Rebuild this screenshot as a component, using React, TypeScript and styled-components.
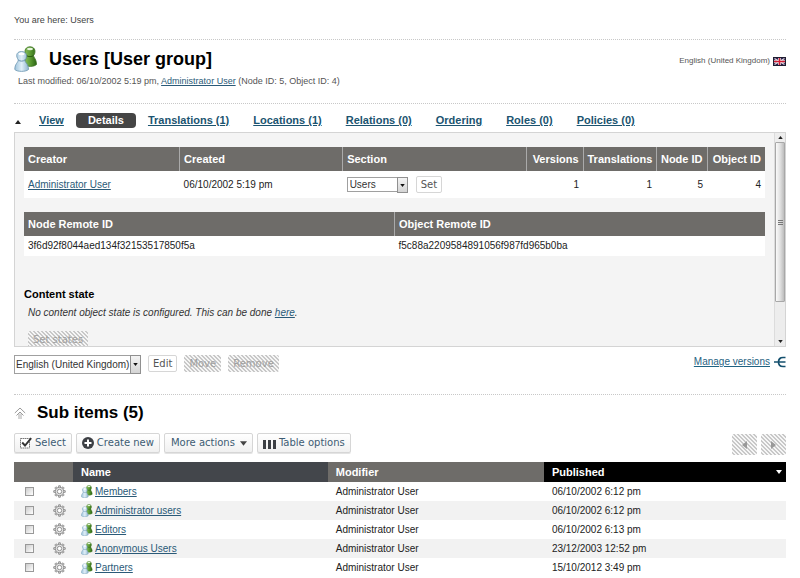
import React, { useId } from "react";
import styled, { createGlobalStyle, css } from "styled-components";

const GlobalStyle = createGlobalStyle`
  * { box-sizing: border-box; }
  body {
    margin: 0;
    background: #fff;
    color: #333;
    font-family: "Liberation Sans", Arial, sans-serif;
    font-size: 10px;
    line-height: 14px;
  }
  h1, h2, h3, p { margin: 0; }
  button, select, input { margin: 0; font: inherit; color: inherit; }
`;

const hatch = css`
  background: linear-gradient(45deg, #c8c8c8 25%, #f6f6f6 25% 50%, #c8c8c8 50% 75%, #f6f6f6 75%) 0 0 / 4px 4px;
`;

const Page = styled.div`
  padding: 0 14px;
`;

const Breadcrumb = styled.nav`
  padding: 13px 0 12px;
  font-size: 9px;
  color: #444;
`;

const Link = styled.a`
  color: #2a5a78;
  text-decoration: underline;
`;

const Header = styled.header`
  display: flex;
  justify-content: space-between;
  align-items: flex-start;
  padding: 6px 0 15px;
  border-top: 1px dotted #c8c8c8;
  border-bottom: 1px dotted #c8c8c8;
`;

const TitleRow = styled.div`
  display: flex;
  align-items: center;
  gap: 11px;
  height: 26px;
  margin-bottom: 2px;
`;

const Title = styled.h1`
  font-size: 18px;
  line-height: 26px;
  color: #000;
`;

const Modified = styled.p`
  padding-left: 4px;
  font-size: 9px;
  color: #555;
`;

const Language = styled.div`
  display: flex;
  align-items: center;
  gap: 3px;
  padding-top: 8px;
  font-size: 8px;
  color: #555;
`;

const TabBar = styled.nav`
  display: flex;
  align-items: center;
  padding: 8px 0 3px;
`;

const TabToggle = styled.button`
  display: flex;
  width: 13px;
  height: 17px;
  padding: 2px 1px 0;
  align-items: center;
  border: 0;
  background: none;
`;

const Tab = styled.a<{ $active?: boolean }>`
  padding: 0 12px;
  font-size: 11px;
  font-weight: bold;
  line-height: 17px;
  color: #1b5470;
  text-decoration: underline;
  ${(p) =>
    p.$active &&
    css`
      line-height: 15px;
      border-radius: 4px;
      background: #454545;
      color: #fff;
      text-decoration: none;
    `}
`;

const Panel = styled.section`
  display: flex;
  max-height: 215px;
  overflow: hidden;
  border: 1px solid #d4d4d4;
  background: #f4f4f4;
`;

const PanelBody = styled.div`
  flex: 1;
  min-width: 0;
  padding: 14px 9px 0;
`;

const ScrollBar = styled.div`
  display: flex;
  flex-direction: column;
  align-items: center;
  width: 11px;
  padding: 3px 0;
  border-left: 1px solid #dcdcdc;
  background: #ededed;
`;

const Thumb = styled.div`
  display: flex;
  flex-direction: column;
  align-items: center;
  justify-content: center;
  gap: 1px;
  width: 10px;
  height: 160px;
  margin: 3px 0 auto;
  border: 1px solid #a8a8a8;
  border-radius: 1px;
  background: linear-gradient(90deg, #fafafa, #e2e2e2 50%, #bdbdbd);
`;

const Grip = styled.span`
  width: 5px;
  height: 1px;
  background: #777;
`;

const InfoTable = styled.table`
  width: 100%;
  margin-bottom: 14px;
  table-layout: fixed;
  border-collapse: collapse;
  background: #fff;
  color: #222;
`;

const InfoHead = styled.th<{ $right?: boolean }>`
  height: 24px;
  padding: 0 4px;
  background: #6e6c69;
  color: #fff;
  font-size: 11px;
  text-align: ${(p) => (p.$right ? "right" : "left")};
  white-space: nowrap;

  & + & {
    border-left: 1px solid #aaa;
  }
`;

const InfoCell = styled.td<{ $right?: boolean; $tall?: boolean }>`
  height: ${(p) => (p.$tall ? 27 : 20)}px;
  padding: 0 4px;
  text-align: ${(p) => (p.$right ? "right" : "left")};
`;

const Col = styled.col<{ $w?: string }>`
  width: ${(p) => p.$w ?? "auto"};
`;

const Inline = styled.div`
  display: flex;
  align-items: center;
  gap: 8px;
`;

const SelectBox = styled.span<{ $small?: boolean }>`
  display: inline-grid;
  grid-template-columns: 1fr 10px;
  width: ${(p) => (p.$small ? 61 : 127)}px;
  height: ${(p) => (p.$small ? 15 : 19)}px;
  border: 1px solid #a0a0a0;
  background: #fff;
  color: #333;
`;

const NativeSelect = styled.select<{ $small?: boolean }>`
  grid-column: 1 / 3;
  grid-row: 1;
  min-width: 0;
  padding: 0 0 0 ${(p) => (p.$small ? 2 : 1)}px;
  border: 0;
  appearance: none;
  background: none;
`;

const SelectArrow = styled.span`
  display: flex;
  grid-column: 2;
  grid-row: 1;
  align-items: center;
  justify-content: center;
  border: 1px solid #909090;
  margin: -1px;
  margin-left: 0;
  background: linear-gradient(#f4f4f4, #d4d4d4);
  pointer-events: none;
`;

const Button = styled.button<{ $size?: "tool" | "menu" | "page" }>`
  display: inline-flex;
  align-items: center;
  justify-content: center;
  gap: 3px;
  height: 17px;
  padding: 0 4px;
  border: 1px solid #d6d6d6;
  border-radius: 2px;
  background: #fff;
  color: #555;
  font-family: "DejaVu Sans", Verdana, sans-serif;
  font-size: 10px;
  line-height: 14px;
  white-space: nowrap;

  ${(p) =>
    (p.$size === "tool" || p.$size === "menu") &&
    css`
      height: 20px;
      padding: 0 5px;
      background: linear-gradient(#fff, #f0f0f0);
      color: #3d5c73;
      box-shadow: 0 1px 0 #e4e4e4;
    `}

  ${(p) =>
    p.$size === "menu" &&
    css`
      padding: 0 5px 0 6px;
      gap: 5px;
    `}

  &:disabled {
    ${hatch}
    border: 0;
    padding: 0 5px;
    color: #a0a0a0;
  }

  ${(p) =>
    p.$size === "page" &&
    css`
      width: 25px;
      height: 21px;
    `}
`;

const StateTitle = styled.h3`
  padding-top: 16px;
  font-size: 11px;
  line-height: 16px;
  color: #000;
`;

const StateText = styled.p`
  padding: 4px 4px 11px;
  font-style: italic;
`;

const StateActions = styled.div`
  padding-left: 4px;
`;

const ActionRow = styled.div`
  display: flex;
  justify-content: space-between;
  align-items: flex-start;
  padding: 8px 0 20px;
`;

const ActionGroup = styled.div`
  display: flex;
  align-items: flex-start;
  gap: 7px;
`;

const VersionsLink = styled(Link)`
  display: flex;
  align-items: center;
  gap: 4px;
  color: #1f6282;
`;

const SubHeader = styled.div`
  display: flex;
  align-items: center;
  gap: 11px;
  padding: 7px 0 9px;
  border-top: 1px dotted #c8c8c8;
`;

const SubTitle = styled.h2`
  font-size: 17px;
  line-height: 22px;
  color: #000;
`;

const Toolbar = styled.div`
  display: flex;
  gap: 4px;
  padding-bottom: 7px;
`;

const Pager = styled.div`
  display: flex;
  gap: 4px;
  margin-left: auto;
  padding-top: 1px;
`;

const ItemTable = styled.table`
  width: 100%;
  table-layout: fixed;
  border-collapse: collapse;
  color: #222;
`;

const ItemHead = styled.th<{ $tone?: "name" | "sorted" }>`
  height: 20px;
  padding: 0 4px 0 8px;
  background: ${(p) =>
    p.$tone === "name" ? "#43464b" : p.$tone === "sorted" ? "#000" : "#6e6c69"};
  color: #fff;
  font-size: 11px;
  text-align: left;

  & + & {
    box-shadow: ${(p) => (p.$tone ? "none" : "inset 1px 0 0 #999")};
  }
`;

const SortLabel = styled.span`
  display: flex;
  align-items: center;
  justify-content: space-between;
`;

const ItemRow = styled.tr`
  &:nth-child(even) {
    background: #f2f2f2;
  }
`;

const ItemCell = styled.td<{ $center?: boolean }>`
  height: 19px;
  padding: ${(p) => (p.$center ? "0" : "0 8px")};
  text-align: ${(p) => (p.$center ? "center" : "left")};
`;

const ItemName = styled.div`
  display: flex;
  align-items: center;
  gap: 2px;
`;

const CheckBox = styled.input`
  display: block;
  width: 9px;
  height: 9px;
  margin: 0 auto;
  border: 1px solid #999;
  appearance: none;
  background: linear-gradient(135deg, #ccc, #fff);

  &:checked {
    background: #444;
  }
`;

const IconButton = styled.button`
  display: block;
  margin: 0 auto;
  padding: 0;
  border: 0;
  background: none;
`;

const Icon = styled.svg`
  display: block;
  flex: none;
`;

function Triangle({ down, color = "#222", size = 6 }: { down?: boolean; color?: string; size?: number }) {
  return (
    <Icon width={size} height={size - 2} viewBox="0 0 6 4" aria-hidden>
      <path d={down ? "M0 0H6L3 4Z" : "M0 4H6L3 0Z"} fill={color} />
    </Icon>
  );
}

function GroupIcon({ width, height }: { width: number; height: number }) {
  const id = useId();
  return (
    <Icon width={width} height={height} viewBox="0 0 24 26" aria-hidden>
      <defs>
        <linearGradient id={`${id}g`} x1="0" x2="1">
          <stop offset="0" stopColor="#8cc063" />
          <stop offset="0.5" stopColor="#5c9c33" />
          <stop offset="1" stopColor="#2c6414" />
        </linearGradient>
        <linearGradient id={`${id}b`} x1="0" x2="1">
          <stop offset="0" stopColor="#9fc4dc" />
          <stop offset="0.5" stopColor="#e0eff8" />
          <stop offset="1" stopColor="#8fb5ce" />
        </linearGradient>
      </defs>
      <path
        d="M11.500 8C10 4 12 0.800 16 0.800S22 4 20.500 8L19.500 9.500C20 12 22.500 13.500 22.500 18.500C20 21 13 21 10 18.500C10 14 12.500 12 12.500 9.500Z"
        fill={`url(#${id}g)`}
        stroke="#3c7422"
        strokeWidth="0.8"
      />
      <ellipse cx="16" cy="3" rx="3" ry="1.300" fill="#e6f5dc" />
      <path d="M12.500 9.500C14 11 18 11 19.500 9.500" fill="none" stroke="#2a5c14" />
      <path
        d="M3.500 12.500C1.500 8.500 3.500 5.500 7.500 5.500S13.500 8.500 12 12.500L10.800 14C11 17 14.500 17.500 14.500 23.500C12 26 3 26 0.800 23.500C0.800 17.500 4 17 4.300 14Z"
        fill={`url(#${id}b)`}
        stroke="#6a94b0"
        strokeWidth="0.8"
      />
      <ellipse cx="7.500" cy="8" rx="3" ry="1.300" fill="#fff" />
      <path d="M4.300 14C6 15.500 9.200 15.500 10.800 14" fill="none" stroke="#6a94b0" />
    </Icon>
  );
}

function FlagIcon() {
  return (
    <Icon width="13" height="9" viewBox="0 0 13 9" role="img" aria-label="United Kingdom">
      <rect width="13" height="9" fill="#20204a" />
      <path d="M1.500 1.500L11.500 7.500M11.500 1.500L1.500 7.500" stroke="#e8d8e0" strokeWidth="1.300" />
      <path d="M6.500 1V8M1 4.500H12" stroke="#fff" strokeWidth="2.600" />
      <path d="M6.500 1V8M1 4.500H12" stroke="#d01c34" strokeWidth="1.500" />
      <rect x="0.500" y="0.500" width="12" height="8" fill="none" stroke="#201c30" />
    </Icon>
  );
}

function VersionsIcon() {
  return (
    <Icon width="12" height="12" viewBox="0 0 12 12" aria-hidden>
      <path
        d="M11.500 1.500H9C6 1.500 4.500 3.500 4.500 6S6 10.500 9 10.500H11.500M0 6H11.500"
        fill="none"
        stroke="#14506e"
        strokeWidth="1.700"
      />
    </Icon>
  );
}

function UpIcon() {
  return (
    <Icon width="12" height="13" viewBox="0 0 12 13" aria-hidden>
      <path d="M0.800 6L6 1L11.200 6M2.500 8.500L6 5L9.500 8.500" fill="none" stroke="#999" strokeWidth="1" />
      <path d="M5 6.500V12M7 6.500V12" stroke="#aaa" strokeWidth="1" />
    </Icon>
  );
}

function GearIcon() {
  const teeth = [0, 45, 90, 135, 180, 225, 270, 315];
  return (
    <Icon width="13" height="13" viewBox="0 0 13 13" aria-hidden>
      {teeth.map((a) => (
        <path key={a} d="M5.400 2.300L5.700 0.700H7.300L7.600 2.300" fill="#ddd" stroke="#888" strokeWidth="0.800" transform={`rotate(${a} 6.500 6.500)`} />
      ))}
      <circle cx="6.500" cy="6.500" r="4.200" fill="#e4e4e4" stroke="#888" strokeWidth="0.900" />
      <circle cx="6.500" cy="6.500" r="2.200" fill="#fff" stroke="#888" strokeWidth="0.900" />
    </Icon>
  );
}

function TickIcon() {
  return (
    <Icon width="12" height="12" viewBox="0 0 12 12" aria-hidden>
      <rect x="0.500" y="1.500" width="9" height="9.500" fill="#fff" stroke="#777" strokeDasharray="1.500 0.500" />
      <path d="M2.200 5.500L5 8.500L11.200 1.200" fill="none" stroke="#333" strokeWidth="1.900" />
    </Icon>
  );
}

function PlusIcon() {
  return (
    <Icon width="12" height="12" viewBox="0 0 12 12" aria-hidden>
      <circle cx="6" cy="6" r="6" fill="#3c3f44" />
      <path d="M6 2.500V9.500M2.500 6H9.500" stroke="#fff" strokeWidth="2" />
    </Icon>
  );
}

function BarsIcon() {
  return (
    <Icon width="13" height="12" viewBox="0 0 13 12" aria-hidden>
      <path d="M0 3H3V12H0ZM5 3H8V12H5ZM10 3H13V12H10Z" fill="#3c3f44" />
    </Icon>
  );
}

function PageArrow({ next }: { next?: boolean }) {
  return (
    <Icon width="5" height="8" viewBox="0 0 5 8" aria-hidden>
      <path d={next ? "M0 0V8L5 4Z" : "M5 0V8L0 4Z"} fill="#999" />
    </Icon>
  );
}

function Select({ label, value, small }: { label: string; value: string; small?: boolean }) {
  return (
    <SelectBox $small={small}>
      <NativeSelect $small={small} aria-label={label} defaultValue={value}>
        <option>{value}</option>
      </NativeSelect>
      <SelectArrow>
        <Triangle down size={5} color="#111" />
      </SelectArrow>
    </SelectBox>
  );
}

const tabs = ["View", "Details", "Translations (1)", "Locations (1)", "Relations (0)", "Ordering", "Roles (0)", "Policies (0)"];

const items = [
  { name: "Members", published: "06/10/2002 6:12 pm" },
  { name: "Administrator users", published: "06/10/2002 6:12 pm" },
  { name: "Editors", published: "06/10/2002 6:13 pm" },
  { name: "Anonymous Users", published: "23/12/2003 12:52 pm" },
  { name: "Partners", published: "15/10/2012 3:49 pm" },
];

export default function App() {
  return (
    <Page>
      <GlobalStyle />
      <Breadcrumb>You are here: Users</Breadcrumb>
      <Header>
        <div>
          <TitleRow>
            <GroupIcon width={24} height={26} />
            <Title>Users [User group]</Title>
          </TitleRow>
          <Modified>
            Last modified: 06/10/2002 5:19 pm, <Link href="#user">Administrator User</Link> (Node ID: 5, Object ID: 4)
          </Modified>
        </div>
        <Language>
          English (United Kingdom) <FlagIcon />
        </Language>
      </Header>

      <TabBar>
        <TabToggle aria-label="Collapse tabs">
          <Triangle />
        </TabToggle>
        {tabs.map((t) => (
          <Tab key={t} href="#tab" $active={t === "Details"}>
            {t}
          </Tab>
        ))}
      </TabBar>

      <Panel>
        <PanelBody>
          <InfoTable>
            <colgroup>
              <Col $w="21%" />
              <Col $w="22%" />
              <Col />
              <Col $w="57px" />
              <Col $w="73px" />
              <Col $w="51px" />
              <Col $w="58px" />
            </colgroup>
            <thead>
              <tr>
                <InfoHead>Creator</InfoHead>
                <InfoHead>Created</InfoHead>
                <InfoHead>Section</InfoHead>
                <InfoHead $right>Versions</InfoHead>
                <InfoHead $right>Translations</InfoHead>
                <InfoHead $right>Node ID</InfoHead>
                <InfoHead $right>Object ID</InfoHead>
              </tr>
            </thead>
            <tbody>
              <tr>
                <InfoCell $tall>
                  <Link href="#user">Administrator User</Link>
                </InfoCell>
                <InfoCell $tall>06/10/2002 5:19 pm</InfoCell>
                <InfoCell $tall>
                  <Inline>
                    <Select small label="Section" value="Users" />
                    <Button>Set</Button>
                  </Inline>
                </InfoCell>
                <InfoCell $tall $right>1</InfoCell>
                <InfoCell $tall $right>1</InfoCell>
                <InfoCell $tall $right>5</InfoCell>
                <InfoCell $tall $right>4</InfoCell>
              </tr>
            </tbody>
          </InfoTable>

          <InfoTable>
            <thead>
              <tr>
                <InfoHead>Node Remote ID</InfoHead>
                <InfoHead>Object Remote ID</InfoHead>
              </tr>
            </thead>
            <tbody>
              <tr>
                <InfoCell>3f6d92f8044aed134f32153517850f5a</InfoCell>
                <InfoCell>f5c88a2209584891056f987fd965b0ba</InfoCell>
              </tr>
            </tbody>
          </InfoTable>

          <StateTitle>Content state</StateTitle>
          <StateText>
            No content object state is configured. This can be done <Link href="#states">here</Link>.
          </StateText>
          <StateActions>
            <Button disabled>Set states</Button>
          </StateActions>
        </PanelBody>
        <ScrollBar aria-hidden>
          <Triangle size={5} />
          <Thumb>
            <Grip />
            <Grip />
            <Grip />
          </Thumb>
          <Triangle size={5} down />
        </ScrollBar>
      </Panel>

      <ActionRow>
        <ActionGroup>
          <Select label="Language" value="English (United Kingdom)" />
          <Button>Edit</Button>
          <Button disabled>Move</Button>
          <Button disabled>Remove</Button>
        </ActionGroup>
        <VersionsLink href="#versions">
          Manage versions <VersionsIcon />
        </VersionsLink>
      </ActionRow>

      <SubHeader>
        <UpIcon />
        <SubTitle>Sub items (5)</SubTitle>
      </SubHeader>

      <Toolbar>
        <Button $size="tool">
          <TickIcon />
          Select
        </Button>
        <Button $size="tool">
          <PlusIcon />
          Create new
        </Button>
        <Button $size="menu">
          More actions
          <Triangle down size={7} color="#444" />
        </Button>
        <Button $size="tool">
          <BarsIcon />
          Table options
        </Button>
        <Pager>
          <Button $size="page" disabled aria-label="Previous page">
            <PageArrow />
          </Button>
          <Button $size="page" disabled aria-label="Next page">
            <PageArrow next />
          </Button>
        </Pager>
      </Toolbar>

      <ItemTable>
        <colgroup>
          <Col $w="31px" />
          <Col $w="28px" />
          <Col $w="33%" />
          <Col $w="28%" />
          <Col />
        </colgroup>
        <thead>
          <tr>
            <ItemHead />
            <ItemHead />
            <ItemHead $tone="name">Name</ItemHead>
            <ItemHead>Modifier</ItemHead>
            <ItemHead $tone="sorted">
              <SortLabel>
                Published <Triangle down color="#fff" />
              </SortLabel>
            </ItemHead>
          </tr>
        </thead>
        <tbody>
          {items.map((item) => (
            <ItemRow key={item.name}>
              <ItemCell $center>
                <CheckBox type="checkbox" aria-label={`Select ${item.name}`} />
              </ItemCell>
              <ItemCell $center>
                <IconButton aria-label={`Options for ${item.name}`}>
                  <GearIcon />
                </IconButton>
              </ItemCell>
              <ItemCell>
                <ItemName>
                  <GroupIcon width={12} height={13} />
                  <Link href="#item">{item.name}</Link>
                </ItemName>
              </ItemCell>
              <ItemCell>Administrator User</ItemCell>
              <ItemCell>{item.published}</ItemCell>
            </ItemRow>
          ))}
        </tbody>
      </ItemTable>
    </Page>
  );
}
